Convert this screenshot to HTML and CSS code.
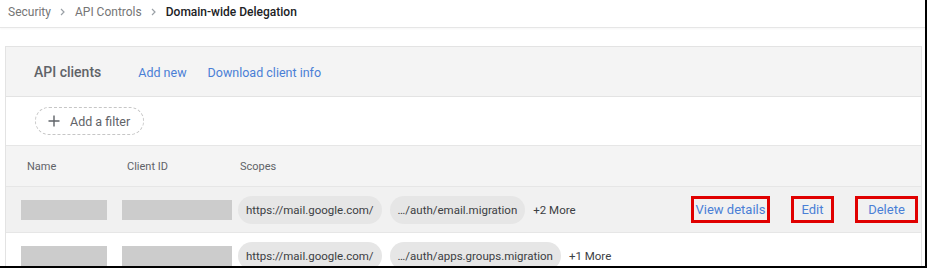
FILE: index.html
```html
<!DOCTYPE html>
<html lang="en">
<head>
    <meta charset="UTF-8">
    <meta name="viewport" content="width=device-width, initial-scale=1.0">
    <title>Domain-wide Delegation</title>
    <link rel="stylesheet" href="styles.css">
</head>
<body>
    <div class="frame">
        <nav class="crumbs">
            <a href="#">Security</a>
            <svg class="chev" width="6" height="8" viewBox="0 0 6 8"><path d="M1 1l3 3-3 3" fill="none" stroke="#9aa0a6" stroke-width="1.2"/></svg>
            <a href="#">API Controls</a>
            <svg class="chev" width="6" height="8" viewBox="0 0 6 8"><path d="M1 1l3 3-3 3" fill="none" stroke="#9aa0a6" stroke-width="1.2"/></svg>
            <span class="current">Domain-wide Delegation</span>
        </nav>

        <div class="card">
            <div class="card-head">
                <span class="card-title">API clients</span>
                <a href="#" class="link">Add new</a>
                <a href="#" class="link">Download client info</a>
            </div>

            <div class="filter-bar">
                <span class="filter-chip">
                    <svg width="12" height="12" viewBox="0 0 12 12"><path d="M6 0.5v11M0.5 6h11" stroke="#5f6368" stroke-width="1.4"/></svg>
                    Add a filter
                </span>
            </div>

            <div class="table-head">
                <span class="th th-name">Name</span>
                <span class="th th-id">Client ID</span>
                <span class="th">Scopes</span>
            </div>

            <div class="row row-hover">
                <div class="cell-name"><span class="blank blank-name"></span></div>
                <div class="cell-id"><span class="blank blank-id"></span></div>
                <div class="cell-scopes">
                    <span class="chip">https://mail.google.com/</span>
                    <span class="chip">…/auth/email.migration</span>
                    <span class="more">+2 More</span>
                </div>
                <div class="actions">
                    <a href="#" class="btn btn-view">View details</a>
                    <a href="#" class="btn btn-edit">Edit</a>
                    <a href="#" class="btn btn-delete">Delete</a>
                </div>
            </div>

            <div class="row">
                <div class="cell-name"><span class="blank blank-name"></span></div>
                <div class="cell-id"><span class="blank blank-id"></span></div>
                <div class="cell-scopes">
                    <span class="chip">https://mail.google.com/</span>
                    <span class="chip">…/auth/apps.groups.migration</span>
                    <span class="more">+1 More</span>
                </div>
            </div>
        </div>
    </div>
</body>
</html>
```

FILE: styles.css
```css
body {
    margin: 0;
    font-family: Roboto, "Liberation Sans", Arial, sans-serif;
    background-color: white;
    color: #3c4043;
}
a {
    text-decoration: none;
}
.frame {
    width: 925px;
    height: 266px;
    overflow: hidden;
    border-right: 2px solid black;
    border-bottom: 2px solid black;
}

/* breadcrumb */
.crumbs {
    height: 24px;
    padding: 0 0 3px 8px;
    display: flex;
    align-items: center;
    gap: 8px;
    font-size: 12px;
    border-bottom: 1px solid #e6e6e6;
    box-shadow: 0 1px 2px rgba(0, 0, 0, 0.04);
    margin-bottom: 18px;
}
.crumbs a {
    color: #757575;
}
.crumbs .chev {
    margin: 0 1px;
}
.crumbs .current {
    color: #202124;
    font-weight: 500;
}

/* card */
.card {
    margin: 0 3px 0 5px;
    border: 1px solid #e3e3e3;
    border-bottom: none;
}
.card-head {
    height: 48px;
    display: flex;
    align-items: center;
    padding-left: 28px;
    padding-top: 1px;
    background-color: #f4f4f4;
    border-bottom: 1px solid #e3e3e3;
}
.card-title {
    font-size: 14px;
    font-weight: 500;
    color: #5f6368;
    margin-right: 37px;
}
.link {
    color: #4a7fd6;
    font-size: 12.5px;
    margin-right: 21px;
}

.filter-bar {
    height: 48px;
    display: flex;
    align-items: center;
    padding-left: 29px;
    border-bottom: 1px solid #e6e6e6;
}
.filter-chip {
    display: flex;
    align-items: center;
    gap: 10px;
    height: 26px;
    padding: 0 13px 0 12px;
    border: 1px dashed #c6c6c6;
    border-radius: 14px;
    font-size: 12.5px;
    color: #5f6368;
}

.table-head {
    height: 40px;
    display: flex;
    align-items: center;
    background-color: #f4f4f4;
    border-bottom: 1px solid #e6e6e6;
    padding-left: 21px;
}
.th {
    font-size: 11px;
    color: #5f6368;
}
.th-name {
    width: 100px;
}
.th-id {
    width: 113px;
}

.row {
    height: 45px;
    display: flex;
    align-items: center;
    padding-left: 15px;
    border-bottom: 1px solid #e6e6e6;
}
.row-hover {
    background-color: #f1f1f1;
}
.cell-name {
    width: 101px;
}
.cell-id {
    width: 116px;
}
.blank {
    display: block;
    height: 20px;
    background-color: #cccccc;
}
.blank-name {
    width: 86px;
}
.blank-id {
    width: 110px;
}
.cell-scopes {
    display: flex;
    align-items: center;
    gap: 8px;
    flex: 1;
}
.chip {
    height: 28px;
    line-height: 28px;
    padding: 0 8px;
    border-radius: 14px;
    background-color: #e6e6e6;
    font-size: 11.5px;
    color: #3c4043;
}
.more {
    font-size: 11.5px;
    color: #3c4043;
}

.actions {
    display: flex;
    align-items: center;
    margin-right: 3px;
}
.btn {
    box-sizing: border-box;
    height: 27px;
    line-height: 21px;
    text-align: center;
    border: 3px solid #e00000;
    color: #4a7fd6;
    font-size: 13px;
}
.btn-view {
    width: 79px;
}
.btn-edit {
    width: 43px;
    margin-left: 21px;
}
.btn-delete {
    width: 63px;
    margin-left: 21px;
}
```
